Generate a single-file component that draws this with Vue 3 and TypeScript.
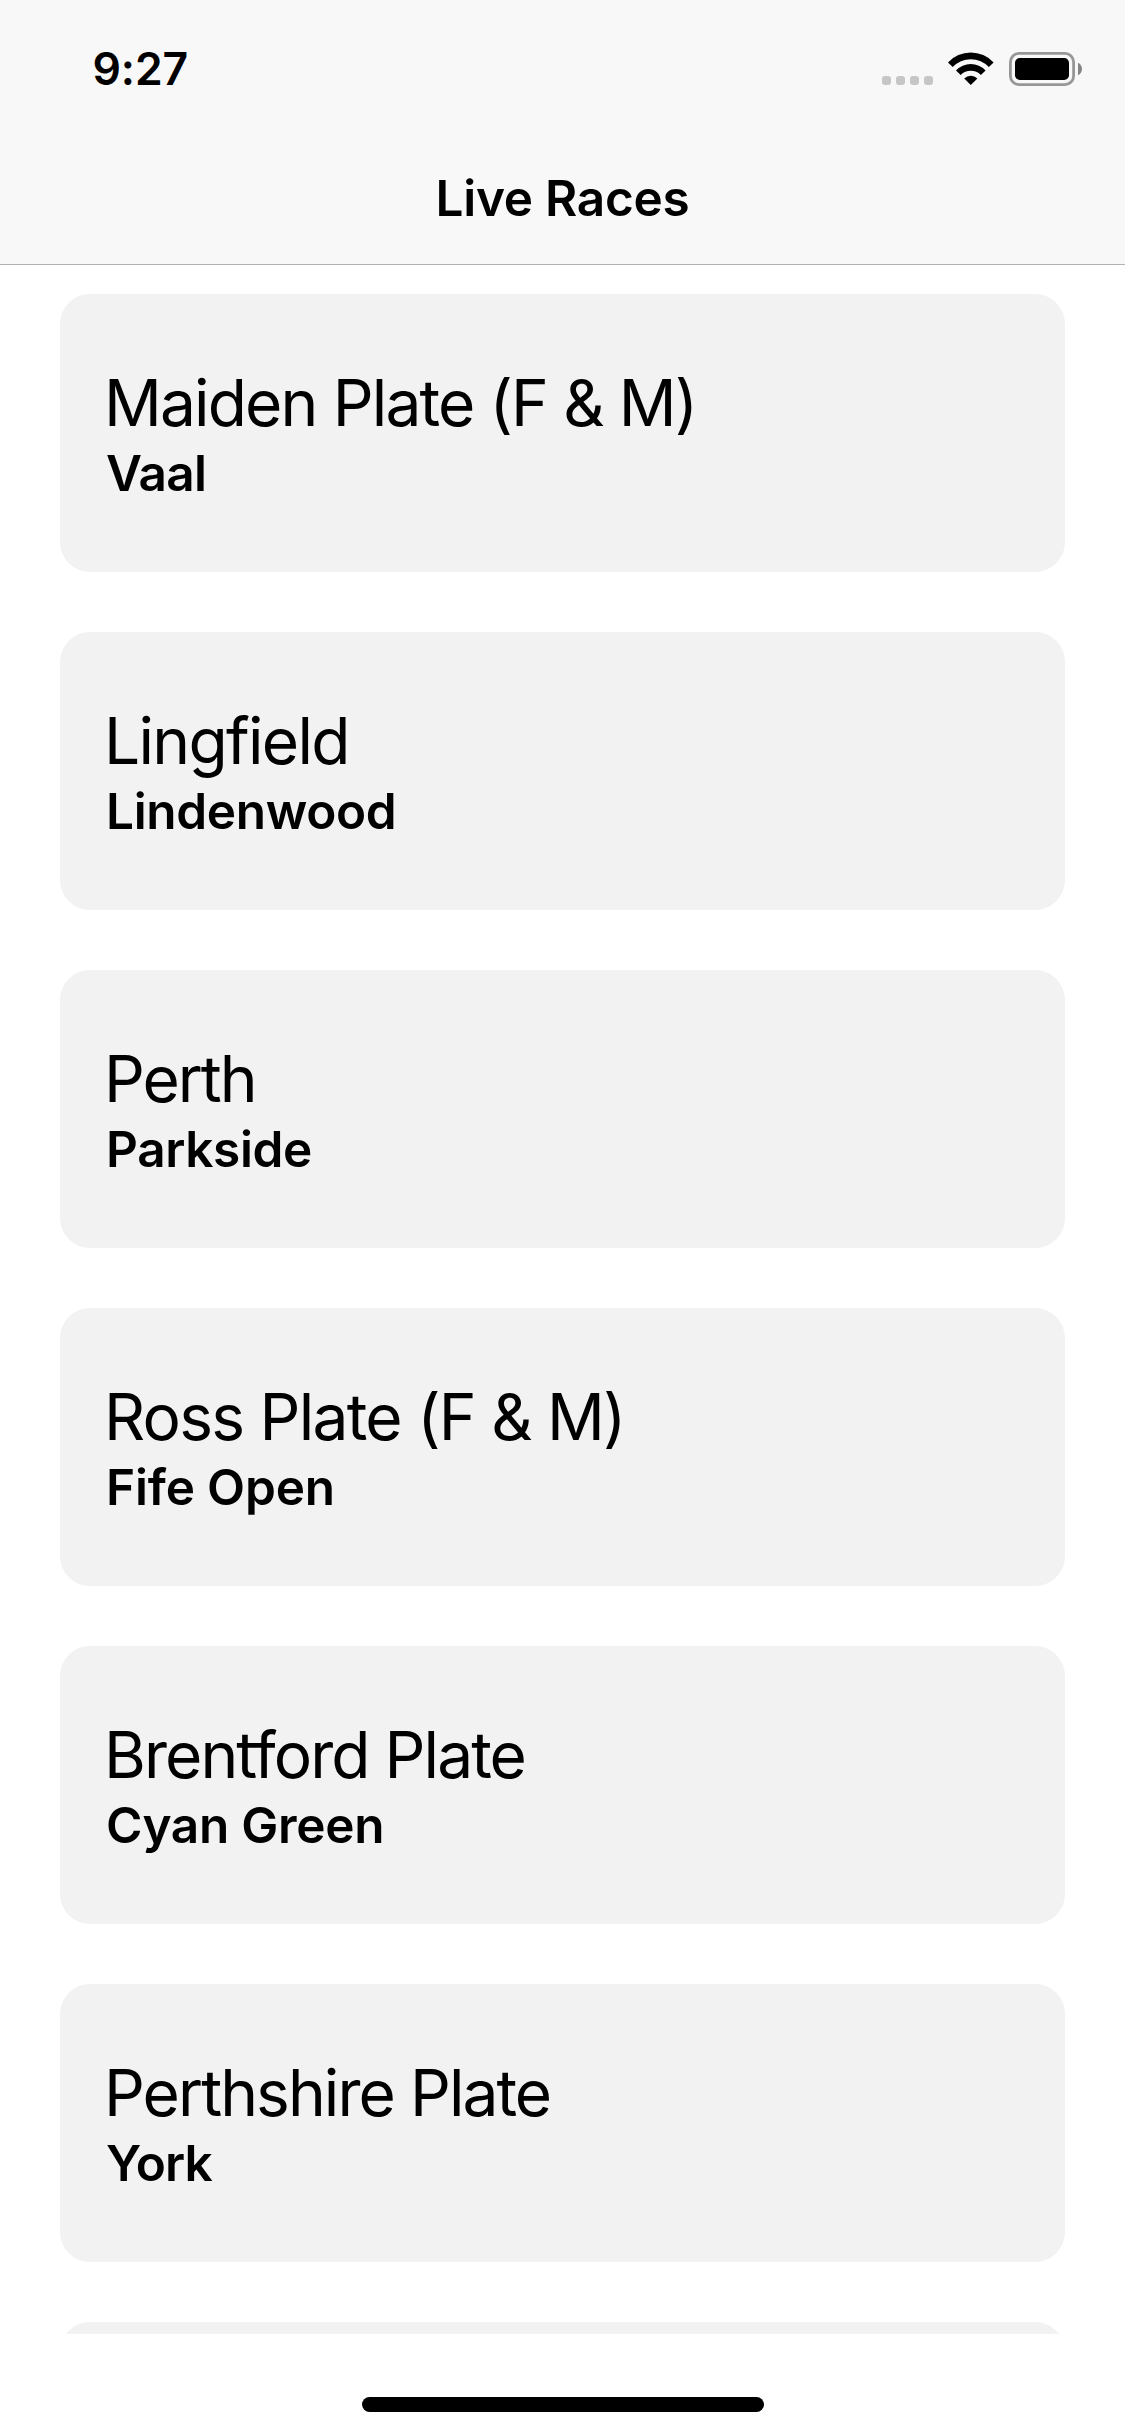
<script setup lang="ts">
interface Race {
  name: string
  venue: string
  nameTracking: number
  venueTracking: number
}

const races: Race[] = [
  { name: 'Maiden Plate (F & M)', venue: 'Vaal', nameTracking: -1.84, venueTracking: -0.7 },
  { name: 'Lingfield', venue: 'Lindenwood', nameTracking: -1.68, venueTracking: -0.32 },
  { name: 'Perth', venue: 'Parkside', nameTracking: -2.05, venueTracking: -0.36 },
  { name: 'Ross Plate (F & M)', venue: 'Fife Open', nameTracking: -1.72, venueTracking: -0.16 },
  { name: 'Brentford Plate', venue: 'Cyan Green', nameTracking: -1.92, venueTracking: -0.28 },
  { name: 'Perthshire Plate', venue: 'York', nameTracking: -1.93, venueTracking: -0.8 },
  { name: '', venue: '', nameTracking: 0, venueTracking: 0 },
]
</script>

<template>
  <div class="screen">
    <header class="header">
      <div class="status">
        <span class="time">9:27</span>
        <div class="indicators">
          <div class="signal"><i v-for="n in 4" :key="n" class="dot"></i></div>
          <svg class="wifi" width="46" height="34" viewBox="0 0 46 34">
            <path d="M0 10.5A31 31 0 0 1 45.6 10.5L40.9 15.1A24.6 24.6 0 0 0 4.7 15.1Z" />
            <path d="M8 18.4A20.4 20.4 0 0 1 37.6 18.4L32.9 23A14.4 14.4 0 0 0 12.7 23Z" />
            <path d="M16.2 26.4A9.6 9.6 0 0 1 29.4 26.4L22.8 33Z" />
          </svg>
          <svg class="battery" width="74" height="34" viewBox="0 0 74 34">
            <rect x="1.4" y="1.4" width="63.2" height="31.2" rx="8.6" fill="none" stroke="#979797" stroke-width="2.8" />
            <rect x="6" y="6" width="54" height="22" rx="4.8" />
            <path d="M69 10.7C71.4 11.8 73 14.2 73 17C73 19.8 71.4 22.2 69 23.3Z" fill="#858585" />
          </svg>
        </div>
      </div>
      <h1 class="title">Live Races</h1>
    </header>
    <main class="list">
      <article v-for="(race, i) in races" :key="i" class="card">
        <h2 class="name" :style="{ letterSpacing: race.nameTracking + 'px' }">{{ race.name }}</h2>
        <p class="venue" :style="{ letterSpacing: race.venueTracking + 'px' }">{{ race.venue }}</p>
      </article>
    </main>
    <footer class="footer"><div class="home"></div></footer>
  </div>
</template>

<style>
body {
  margin: 0;
  background: #fff;
}
</style>

<style scoped>
.screen {
  box-sizing: border-box;
  display: flex;
  flex-direction: column;
  width: 1125px;
  height: 2436px;
  overflow: hidden;
  background: #fff;
  color: #000;
  font-family: Inter, "Liberation Sans", sans-serif;
}
.header {
  box-sizing: border-box;
  flex: none;
  height: 265px;
  padding-top: 42px;
  background: #f8f8f8;
  border-bottom: 1px solid #b2b2b2;
}
.status {
  display: flex;
  justify-content: space-between;
  height: 54px;
  padding: 0 42px 0 92.5px;
}
.time {
  font-size: 44.5px;
  font-weight: 600;
  line-height: 54px;
  letter-spacing: -0.13px;
}
.indicators {
  display: flex;
  align-items: flex-start;
  padding-top: 10px;
}
.signal {
  display: flex;
  gap: 5px;
  margin: 24px 15px 0 0;
}
.dot {
  width: 9px;
  height: 9px;
  border-radius: 3px;
  background: #c6c6c6;
}
.wifi {
  display: block;
  margin-right: 15px;
}
.battery {
  display: block;
}
.title {
  margin: 72px 0 0;
  font-size: 49.5px;
  font-weight: 600;
  line-height: 60px;
  letter-spacing: -0.25px;
  text-align: center;
}
.list {
  flex: none;
  box-sizing: border-box;
  display: flex;
  flex-direction: column;
  gap: 60px;
  height: 2069px;
  padding: 29px 60px 0;
  overflow: hidden;
}
.card {
  box-sizing: border-box;
  flex: none;
  height: 278px;
  padding: 70px 45px 0;
  border-radius: 30px;
  background: #f2f2f2;
}
.name {
  margin: 0 0 1px -1px;
  font-size: 64px;
  font-weight: 400;
  line-height: 78px;
  white-space: nowrap;
}
.venue {
  margin: 0 0 0 1px;
  font-size: 49.5px;
  font-weight: 600;
  line-height: 60px;
  white-space: nowrap;
}
.footer {
  display: flex;
  justify-content: center;
  padding-top: 63px;
}
.home {
  width: 402px;
  height: 15px;
  border-radius: 8px;
  background: #000;
}
</style>
